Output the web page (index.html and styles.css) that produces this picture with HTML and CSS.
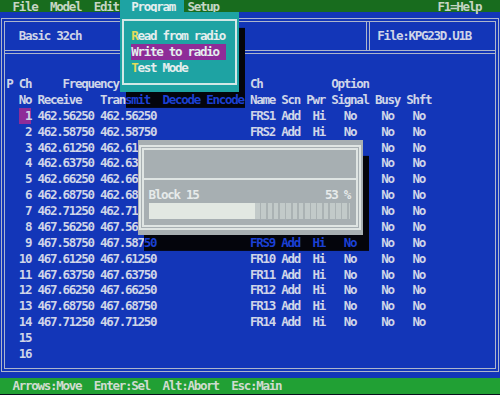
FILE: index.html
```html
<!DOCTYPE html>
<html lang="en">
<head>
    <meta charset="UTF-8">
    <title>KPG23D - Program</title>
    <link rel="stylesheet" href="styles.css">
</head>
<body>
    <div class="screen">
        <div class="menubar">
            <span class="menu-left">  File  Model  Edit</span>
            <span class="menu-open">Program</span>
            <span class="menu-setup">Setup</span>
            <span class="menu-help">F1=Help</span>
        </div>

        <div class="frame">
            <div class="info">
                <div class="info-model">Basic 32ch</div>
                <div class="info-file">File:KPG23D.U1B</div>
            </div>

            <div class="channels">
                <div class="row">
                    <span class="p">P</span><span class="no">Ch</span><span class="freq">    Frequency</span><span class="name">Ch</span><span class="sig">Option</span>
                </div>
                <div class="row">
                    <span class="no">No</span><span class="rx">Receive</span><span class="tx">Tran<span class="shade">smit</span></span><span class="dec shade">Decode</span><span class="enc shade">Encode</span><span class="name">Name</span><span class="scn">Scn</span><span class="pwr">Pwr</span><span class="sig">Signal</span><span class="busy">Busy</span><span class="shft">Shft</span>
                </div>
                <div class="row">
                    <span class="no"><span class="cur"> 1</span></span><span class="rx">462.56250</span><span class="tx">462.56250</span><span class="name">FRS1</span><span class="scn">Add</span><span class="pwr"> Hi</span><span class="sig">  No</span><span class="busy"> No</span><span class="shft"> No</span>
                </div>
                <div class="row">
                    <span class="no"> 2</span><span class="rx">462.58750</span><span class="tx">462.58750</span><span class="name">FRS2</span><span class="scn">Add</span><span class="pwr"> Hi</span><span class="sig">  No</span><span class="busy"> No</span><span class="shft"> No</span>
                </div>
                <!-- rows 3-8 run under the progress window -->
                <div class="row">
                    <span class="no"> 3</span><span class="rx">462.61250</span><span class="tx">462.61</span><span class="busy"> No</span><span class="shft"> No</span>
                </div>
                <div class="row">
                    <span class="no"> 4</span><span class="rx">462.63750</span><span class="tx">462.63</span><span class="busy"> No</span><span class="shft"> No</span>
                </div>
                <div class="row">
                    <span class="no"> 5</span><span class="rx">462.66250</span><span class="tx">462.66</span><span class="busy"> No</span><span class="shft"> No</span>
                </div>
                <div class="row">
                    <span class="no"> 6</span><span class="rx">462.68750</span><span class="tx">462.68</span><span class="busy"> No</span><span class="shft"> No</span>
                </div>
                <div class="row">
                    <span class="no"> 7</span><span class="rx">462.71250</span><span class="tx">462.71</span><span class="busy"> No</span><span class="shft"> No</span>
                </div>
                <div class="row">
                    <span class="no"> 8</span><span class="rx">467.56250</span><span class="tx">467.56</span><span class="busy"> No</span><span class="shft"> No</span>
                </div>
                <div class="row">
                    <span class="no"> 9</span><span class="rx">467.58750</span><span class="tx">467.587<span class="shade">50</span></span><span class="name shade">FRS9</span><span class="scn shade">Add</span><span class="pwr shade"> Hi</span><span class="sig shade">  No</span><span class="busy"> No</span><span class="shft"> No</span>
                </div>
                <div class="row">
                    <span class="no">10</span><span class="rx">467.61250</span><span class="tx">467.61250</span><span class="name">FR10</span><span class="scn">Add</span><span class="pwr"> Hi</span><span class="sig">  No</span><span class="busy"> No</span><span class="shft"> No</span>
                </div>
                <div class="row">
                    <span class="no">11</span><span class="rx">467.63750</span><span class="tx">467.63750</span><span class="name">FR11</span><span class="scn">Add</span><span class="pwr"> Hi</span><span class="sig">  No</span><span class="busy"> No</span><span class="shft"> No</span>
                </div>
                <div class="row">
                    <span class="no">12</span><span class="rx">467.66250</span><span class="tx">467.66250</span><span class="name">FR12</span><span class="scn">Add</span><span class="pwr"> Hi</span><span class="sig">  No</span><span class="busy"> No</span><span class="shft"> No</span>
                </div>
                <div class="row">
                    <span class="no">13</span><span class="rx">467.68750</span><span class="tx">467.68750</span><span class="name">FR13</span><span class="scn">Add</span><span class="pwr"> Hi</span><span class="sig">  No</span><span class="busy"> No</span><span class="shft"> No</span>
                </div>
                <div class="row">
                    <span class="no">14</span><span class="rx">467.71250</span><span class="tx">467.71250</span><span class="name">FR14</span><span class="scn">Add</span><span class="pwr"> Hi</span><span class="sig">  No</span><span class="busy"> No</span><span class="shft"> No</span>
                </div>
                <div class="row">
                    <span class="no">15</span>
                </div>
                <div class="row">
                    <span class="no">16</span>
                </div>
            </div>
        </div>

        <div class="status">  Arrows:Move  Enter:Sel  Alt:Abort  Esc:Main</div>

        <!-- open Program menu -->
        <div class="dropdown">
            <div class="dropdown-frame">
                <div class="dd-item"><span class="hot">R</span>ead from radio</div>
                <div class="dd-item sel">Write to radio</div>
                <div class="dd-item"><span class="hot">T</span>est Mode</div>
            </div>
        </div>

        <!-- write progress -->
        <div class="dialog">
            <div class="dlg-frame">
                <div class="dlg-top"></div>
                <div class="dlg-body">
                    <div class="dlg-line"><span>Block 15</span><span>53 %</span></div>
                    <div class="bar">
                        <div class="bar-done" style="width: 53%;"></div>
                        <div class="bar-left"></div>
                    </div>
                </div>
            </div>
        </div>
    </div>
</body>
</html>
```

FILE: styles.css
```css
body {
    margin: 0;
    background-color: #0a0f1c;
    overflow: hidden;
}

/* text mode: 80 x 25 cells, 6.25px x 15.89px, top row partly off screen */
.screen {
    position: relative;
    width: 500px;
    background-color: #1336b8;
    color: #cfd5e8;
    font-family: "DejaVu Sans Mono", monospace;
    font-size: 12.5px;
    font-weight: bold;
    letter-spacing: -1.275px;
    line-height: 15.89px;
}

.menubar {
    display: flex;
    height: 12.49px;
    box-sizing: border-box;
    padding-top: 2px;
    line-height: 10.49px;
    background-color: #186c1e;
    color: #c6d6c4;
}
.menubar span {
    white-space: pre;
}
.menu-left {
    flex: 0 0 120px;
}
.menu-open {
    flex: 0 0 64px;
    box-sizing: border-box;
    margin-top: -2px;
    padding: 2px 0 0 11.25px;
    background-color: #1ea3a3;
    color: #e4eeee;
}
.menu-setup {
    margin-left: 3.5px;
}
.menu-help {
    margin-left: auto;
    padding-right: 18.75px;
}

.frame {
    margin: 5.95px 1.1px;
    border: 4px double #aeb6cc;
}

.info {
    display: flex;
    border-bottom: 4px double #aeb6cc;
}
.info-model {
    flex: 0 0 364.8px;
    box-sizing: border-box;
    padding: 5.94px 0 5.94px 13.65px;
    border-right: 4px double #aeb6cc;
}
.info-file {
    padding: 5.94px 0 5.94px 7.35px;
}

.channels {
    padding: 21.83px 0 5.94px 1.15px;
}
.row {
    display: grid;
    grid-template-columns: 12.5px 18.75px 62.5px 62.5px 43.75px 43.75px 31.25px 25px 25px 43.75px 31.25px 87.5px;
    height: 15.89px;
}
.row span {
    white-space: pre;
}
.p { grid-column: 1; }
.no { grid-column: 2; }
.rx { grid-column: 3; }
.tx { grid-column: 4; }
.freq { grid-column: 3 / 5; }
.dec { grid-column: 5; }
.enc { grid-column: 6; }
.name { grid-column: 7; }
.scn { grid-column: 8; }
.pwr { grid-column: 9; }
.sig { grid-column: 10; }
.busy { grid-column: 11; }
.shft { grid-column: 12; }

.cur {
    display: inline-block;
    height: 15.89px;
    background-color: #8e2c98;
}

/* text lying in a window's shadow */
.shade {
    position: relative;
    z-index: 3;
    color: #1b40d4;
}

.status {
    height: 15.89px;
    background-color: #21a034;
    color: #cfdccf;
    white-space: pre;
}

.dropdown {
    position: absolute;
    left: 120px;
    top: 12.49px;
    z-index: 2;
    width: 119px;
    height: 79.45px;
    box-sizing: border-box;
    padding: 6.95px 2px;
    background-color: #1ea3a3;
    color: #e4eeee;
    box-shadow: 6px 15.89px 0 #04050c;
}
.dropdown-frame {
    height: 100%;
    box-sizing: border-box;
    padding: 6.94px 0 6.94px 7.25px;
    border: 2px solid #d2e8e6;
}
.dd-item {
    height: 15.89px;
    white-space: pre;
}
.dd-item.sel {
    width: 95px;
    background-color: #8e2c98;
}
.hot {
    color: #e4dc5a;
}

.dialog {
    position: absolute;
    left: 137.5px;
    top: 139.61px;
    z-index: 2;
    width: 225px;
    height: 95.34px;
    box-sizing: border-box;
    padding: 5.45px 1.5px;
    background-color: #a7afb2;
    color: #e6eaea;
    box-shadow: 6px 15.89px 0 #04050c;
}
.dlg-frame {
    height: 100%;
    box-sizing: border-box;
    padding: 5.44px 0;
    border: 5px double #dfe5e3;
}
.dlg-top {
    height: 22.84px;
    border-bottom: 2px solid #dfe5e3;
}
.dlg-body {
    padding: 6.94px 6px 0 4.5px;
}
.dlg-line {
    display: flex;
    justify-content: space-between;
    height: 15.89px;
}
.dlg-line span {
    white-space: pre;
}
.bar {
    display: flex;
    height: 15.89px;
}
.bar-done {
    background-color: #e2e8e2;
}
.bar-left {
    flex: 1;
    background-image: repeating-linear-gradient(90deg, #c2cac9 0 4.5px, #aab2b3 4.5px 6.25px);
}
```
